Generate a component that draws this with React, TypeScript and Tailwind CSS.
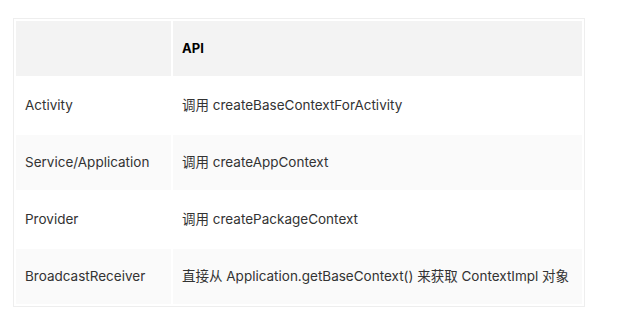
export default function App() {
  const rows = [
    ["Activity", "调用 createBaseContextForActivity"],
    ["Service/Application", "调用 createAppContext"],
    ["Provider", "调用 createPackageContext"],
    ["BroadcastReceiver", "直接从 Application.getBaseContext() 来获取 ContextImpl 对象"],
  ];
  return (
    <div
      className="w-[628px] h-[323px] bg-white pl-[13px] pt-[18px]"
      style={{ fontFamily: 'Inter, "Noto Sans CJK SC", sans-serif' }}
    >
      <table className="border-separate border-spacing-[2px] border border-[#eeeeee] w-[572px] text-[13.5px] text-[#333333]">
        <thead>
          <tr className="bg-[#f3f3f3] h-[55px]">
            <th className="w-[155px] p-0"></th>
            <th className="text-left font-bold text-black px-[9px] py-0 text-[13px]">API</th>
          </tr>
        </thead>
        <tbody>
          {rows.map((r, i) => (
            <tr key={i} className={i % 2 === 0 ? "bg-white h-[55px]" : "bg-[#fafafa] h-[55px]"}>
              <td className="px-[9px] py-0 w-[155px]">{r[0]}</td>
              <td className="px-[9px] py-0">{r[1]}</td>
            </tr>
          ))}
        </tbody>
      </table>
    </div>
  );
}
